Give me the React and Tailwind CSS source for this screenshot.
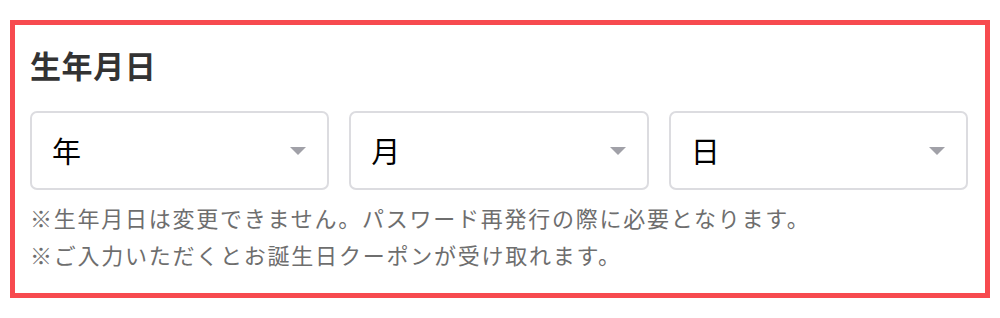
export default function App() {
  const Sel = ({ label }) => (
    <div className="flex-1 h-[79px] rounded-[7px] border-2 border-[#dcdce0] bg-white flex items-center justify-between pl-[20px] pr-[21px]">
      <span className="text-[29px] leading-none text-black">{label}</span>
      <svg width="16" height="8" viewBox="0 0 16 8"><path d="M0 0 H16 L8 8 Z" fill="#a1a1a8" /></svg>
    </div>
  );
  return (
    <div className="w-[1000px] h-[318px] bg-white pt-[20px] pl-[10px]" style={{ fontFamily: '"Noto Sans CJK JP", "Noto Sans", sans-serif' }}>
      <div className="w-[980px] h-[278px] border-[5px] border-[#f74a4f] pl-[15px] pr-[17px] pt-[20px]">
        <div className="text-[31px] leading-[40px] font-bold text-[#333333] tracking-[0.02em]">生年月日</div>
        <div className="flex gap-[20px] mt-[26px]">
          <Sel label="年" />
          <Sel label="月" />
          <Sel label="日" />
        </div>
        <div className="mt-[9px] text-[22px] leading-[37px] text-[#6e6e6e] tracking-[0.08em]">
          <div>※生年月日は変更できません。パスワード再発行の際に必要となります。</div>
          <div>※ご入力いただくとお誕生日クーポンが受け取れます。</div>
        </div>
      </div>
    </div>
  );
}
